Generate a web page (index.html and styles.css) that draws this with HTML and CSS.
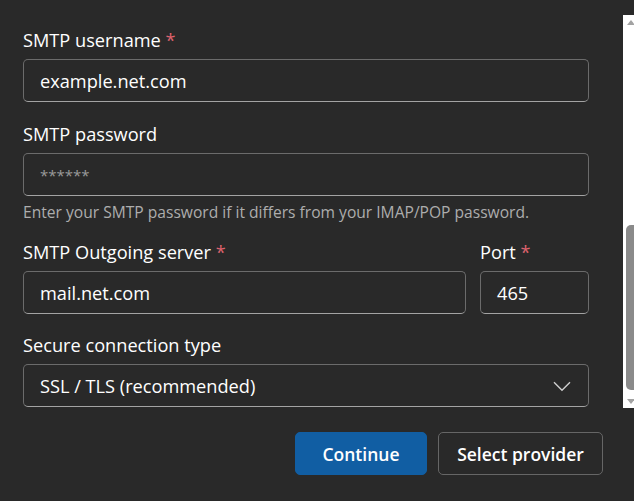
FILE: index.html
```html
<!DOCTYPE html>
<html lang="en">
<head>
<meta charset="utf-8">
<title>SMTP settings</title>
<link rel="stylesheet" href="styles.css">
</head>
<body>
<div class="dialog">
  <div class="scroll-area">
    <form class="form">
      <div class="field">
        <label class="label">SMTP username <span class="req">*</span></label>
        <div class="input"><span class="value">example.net.com</span></div>
      </div>
      <div class="field">
        <label class="label">SMTP password</label>
        <div class="input"><span class="placeholder">******</span></div>
        <div class="hint">Enter your SMTP password if it differs from your IMAP/POP password.</div>
      </div>
      <div class="row">
        <div class="field grow">
          <label class="label">SMTP Outgoing server <span class="req">*</span></label>
          <div class="input"><span class="value">mail.net.com</span></div>
        </div>
        <div class="field port">
          <label class="label">Port <span class="req">*</span></label>
          <div class="input"><span class="value">465</span></div>
        </div>
      </div>
      <div class="field last">
        <label class="label">Secure connection type</label>
        <div class="input select">
          <span class="value">SSL / TLS (recommended)</span>
          <svg class="chevron" width="18" height="11" viewBox="0 0 18 11"><path d="M1 1.2 L9 9.2 L17 1.2" fill="none" stroke="#cfcfcf" stroke-width="1.4"/></svg>
        </div>
      </div>
    </form>
    <div class="scrollbar">
      <div class="arrow up"></div>
      <div class="track"><div class="thumb"></div></div>
      <div class="arrow down"></div>
    </div>
  </div>
  <div class="actions">
    <button class="btn primary" type="button">Continue</button>
    <button class="btn secondary" type="button">Select provider</button>
  </div>
</div>
</body>
</html>
```
FILE: styles.css
```css
html, body {
  margin: 0;
  padding: 0;
  background: #292929;
  font-family: "Open Sans", "Noto Sans", sans-serif;
  color: #ffffff;
}
.dialog {
  width: 634px;
  height: 501px;
  padding-top: 15px;
  box-sizing: border-box;
}
.scroll-area {
  display: flex;
  height: 393px;
}
.form {
  width: 566px;
  margin-left: 23px;
  padding-top: 12px;
}
.field {
  display: flex;
  flex-direction: column;
  margin-bottom: 19px;
}
.field.last {
  margin-bottom: 0;
}
.row {
  display: flex;
  gap: 14.5px;
  margin-top: -3px;
}
.row .field {
  margin-bottom: 18px;
}
.grow {
  flex: 1;
}
.port {
  width: 109px;
}
.label {
  font-size: 18.2px;
  line-height: 26px;
  height: 26px;
  margin-bottom: 6px;
  color: #ffffff;
}
.req {
  color: #dc626d;
}
.input {
  height: 43px;
  box-sizing: border-box;
  border: 1px solid #6b6b6b;
  border-bottom-color: #a3a3a3;
  border-radius: 5px;
  background: #292929;
  padding: 0 16px;
  display: flex;
  align-items: center;
  font-size: 18.2px;
}
.value {
  color: #ffffff;
}
.placeholder {
  color: #9a9a9a;
  font-size: 15px;
  letter-spacing: 0;
}
.hint {
  margin-top: 5px;
  font-size: 15.6px;
  line-height: 22px;
  color: #adadad;
}
.select {
  justify-content: space-between;
}
.chevron {
  margin-right: 1px;
  margin-top: 1px;
}
.scrollbar {
  margin-left: auto;
  width: 11px;
  height: 393px;
  background: #ffffff;
  display: flex;
  flex-direction: column;
  overflow: hidden;
}
.arrow {
  height: 14px;
  display: flex;
  justify-content: center;
  align-items: center;
  padding-left: 4px;
}
.arrow.up::before {
  content: "";
  border-left: 4px solid transparent;
  border-right: 4px solid transparent;
  border-bottom: 5px solid #a3a3a3;
}
.arrow.down::before {
  content: "";
  border-left: 4px solid transparent;
  border-right: 4px solid transparent;
  border-top: 5px solid #a3a3a3;
}
.track {
  flex: 1;
  padding-top: 196px;
  padding-bottom: 4px;
  box-sizing: border-box;
}
.thumb {
  margin-left: 3px;
  width: 12px;
  height: 100%;
  background: #8a8a8a;
  border-radius: 5px;
}
.actions {
  display: flex;
  justify-content: flex-end;
  gap: 11px;
  margin-top: 24px;
  padding-right: 31px;
}
.btn {
  height: 43px;
  border-radius: 5px;
  font-family: inherit;
  font-size: 17.5px;
  font-weight: 600;
  color: #ffffff;
  cursor: pointer;
}
.primary {
  width: 132px;
  background: #115ea3;
  border: 1px solid #115ea3;
}
.secondary {
  width: 165px;
  background: #292929;
  border: 1px solid #666666;
}
```
